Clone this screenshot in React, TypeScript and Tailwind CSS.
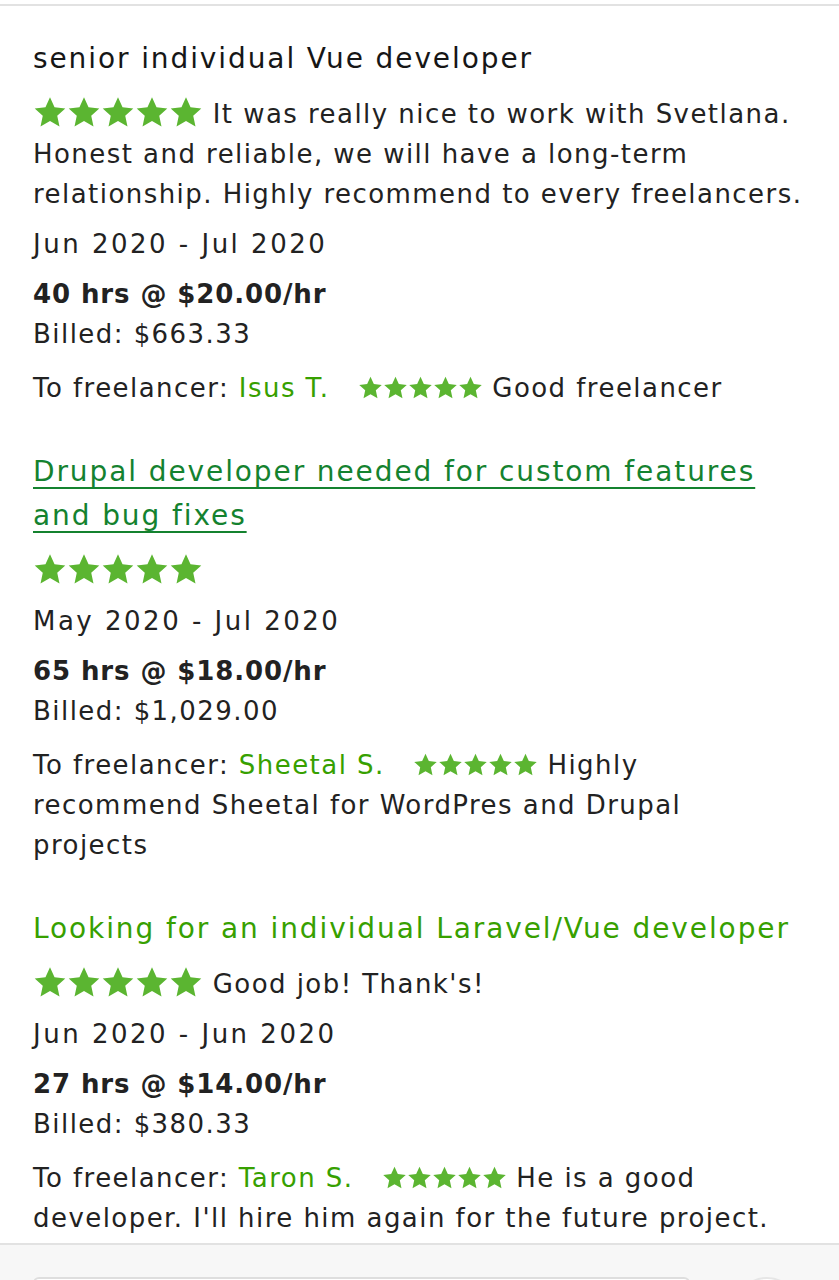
import React from "react";

const GREEN_STAR = "#5bb531";

function Star({ size }: { size: number }) {
  return (
    <svg width={size} height={size} viewBox="0 0 24 24" className="shrink-0">
      <path
        d="M12 1.6l3.2 7.1 7.6.8-5.7 5.2 1.6 7.6L12 18.4l-6.7 3.9 1.6-7.6-5.7-5.2 7.6-.8z"
        fill={GREEN_STAR}
      />
    </svg>
  );
}

function Stars({ big }: { big?: boolean }) {
  const s = big ? 34 : 25;
  return (
    <span className="inline-flex align-middle" style={{ verticalAlign: big ? "-6px" : "-3px" }}>
      {[0, 1, 2, 3, 4].map((i) => (
        <Star key={i} size={s} />
      ))}
    </span>
  );
}

type Item = {
  title: string;
  titleKind: "plain" | "link" | "green";
  comment?: string;
  dates: string;
  hrs: string;
  billed: string;
  freelancer: string;
  feedback: string;
};

const items: Item[] = [
  {
    title: "senior individual Vue developer",
    titleKind: "plain",
    comment:
      "It was really nice to work with Svetlana. Honest and reliable, we will have a long-term relationship. Highly recommend to every freelancers.",
    dates: "Jun 2020 - Jul 2020",
    hrs: "40 hrs @ $20.00/hr",
    billed: "Billed: $663.33",
    freelancer: "Isus T.",
    feedback: "Good freelancer",
  },
  {
    title: "Drupal developer needed for custom features and bug fixes",
    titleKind: "link",
    dates: "May 2020 - Jul 2020",
    hrs: "65 hrs @ $18.00/hr",
    billed: "Billed: $1,029.00",
    freelancer: "Sheetal S.",
    feedback: "Highly recommend Sheetal for WordPres and Drupal projects",
  },
  {
    title: "Looking for an individual Laravel/Vue developer",
    titleKind: "green",
    comment: "Good job! Thank's!",
    dates: "Jun 2020 - Jun 2020",
    hrs: "27 hrs @ $14.00/hr",
    billed: "Billed: $380.33",
    freelancer: "Taron S.",
    feedback: "He is a good developer. I'll hire him again for the future project.",
  },
];

function Entry({ item }: { item: Item }) {
  const titleCls =
    item.titleKind === "plain"
      ? "text-[#161616]"
      : item.titleKind === "link"
      ? "text-[#14822f] underline underline-offset-[6px] decoration-2"
      : "text-[#37a000]";
  return (
    <div className="pb-[42px]">
      <div className={`text-[28px] leading-[44px] tracking-[1.9px] ${titleCls}`}>{item.title}</div>
      <div className="mt-[13px] leading-[40px]">
        <Stars big />
        {item.comment && <span> {item.comment}</span>}
      </div>
      <div className="mt-[10px] leading-[40px] tracking-[2.5px]">{item.dates}</div>
      <div className="mt-[10px] leading-[40px] font-bold tracking-[0.9px]">{item.hrs}</div>
      <div className="leading-[40px]">{item.billed}</div>
      <div className="mt-[14px] leading-[40px]">
        To freelancer: <span className="text-[#37a000]">{item.freelancer}</span>
        <span className="inline-block w-[28px]" />
        <Stars /> {item.feedback}
      </div>
    </div>
  );
}

export default function App() {
  return (
    <div
      className="w-[839px] h-[1280px] overflow-hidden bg-white flex flex-col text-[26px] tracking-[1.45px] text-[#222222]"
      style={{ fontFamily: '"DejaVu Sans", sans-serif' }}
    >
      <div className="h-[4px] bg-white shrink-0" />
      <div className="h-[2px] bg-[#e2e2e2] shrink-0" />
      <div className="px-[33px] pt-[31px] flex-1 min-h-0 overflow-hidden">
        {items.map((it, i) => (
          <Entry key={i} item={it} />
        ))}
      </div>
      <div className="h-[2px] bg-[#e2e2e2] shrink-0" />
      <div className="bg-[#f7f7f7] h-[35px] shrink-0 overflow-hidden px-[33px] pt-[32px] flex gap-[44px]">
        <div className="w-[657px] h-[40px] shrink-0 bg-white border-2 border-[#dedede] rounded-t-[6px]" />
        <div className="w-[66px] h-[66px] shrink-0 rounded-full bg-white border-2 border-[#e6e6e6]" />
      </div>
    </div>
  );
}
